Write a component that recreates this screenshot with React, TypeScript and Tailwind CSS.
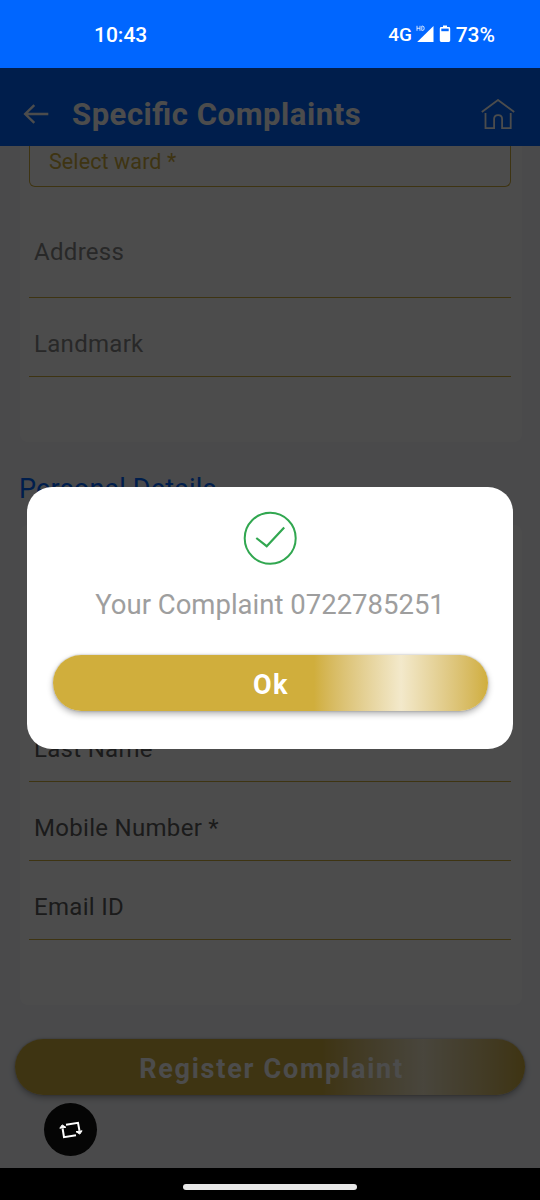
import type { ReactNode } from "react";

function StatusBar() {
  return (
    <div className="h-[68px] shrink-0 bg-[#0066ff] text-white flex items-center justify-between pt-0.5 pl-[94px] pr-[45px]">
      <span className="text-[21px] leading-6 font-medium">10:43</span>
      <div className="flex items-center">
        <span className="text-[19px] leading-6 font-medium tracking-[-0.2px]">4G</span>
        <svg className="ml-[4px] mb-0.5" width="18" height="18" viewBox="0 0 18 18">
          <path d="M17.500 1v16H1.200z" fill="#fff" />
          <path d="M1 .8v5M4 .8v5M1 3.300h3M5.800 1.100v4.400h.8q1.600 0 1.600-2.200t-1.600-2.200z" fill="none" stroke="#fff" strokeWidth=".8" />
        </svg>
        <svg className="ml-[5px] mb-0.5" width="12" height="18" viewBox="0 0 12 18">
          <path d="M4 .5h4v1.500h1.800q1.400 0 1.400 1.400v12.200q0 1.400-1.400 1.400H2.200q-1.400 0-1.400-1.400V3.400Q.8 2 2.200 2H4z" fill="#fff" />
          <path d="M2.300 3.600h7.400v2.600H2.300z" fill="#0066ff" />
        </svg>
        <span className="ml-[5px] text-[21px] leading-6 font-medium">73%</span>
      </div>
    </div>
  );
}

function Header() {
  return (
    <header className="h-[78px] shrink-0 bg-[#0066ff] text-white flex items-center pt-[14px] pl-[23px] pr-[25px]">
      <svg width="26" height="20" viewBox="0 0 26 20" fill="none" stroke="currentColor" strokeWidth="2.400">
        <path d="M25.300 10H2.500M11.300 1.200L2.200 10l9.100 8.800" />
      </svg>
      <h1 className="ml-[23px] mt-0.5 flex-1 text-[31px] leading-9 font-bold tracking-[0.55px] [font-feature-settings:'liga']">
        Specific Complaints
      </h1>
      <svg width="34" height="31" viewBox="0 0 34 31" fill="none" stroke="currentColor" strokeWidth="1.800">
        <path d="M.8 13L17 1l16.200 12" />
        <path d="M4.500 14v15.200h8.600V20q0-3.800 4-3.800t4 3.800v9.200h8.600V14" />
      </svg>
    </header>
  );
}

function Field({ label, className }: { label: string; className: string }) {
  return (
    <div className={`border-b border-[#d0ae3c] px-[5px] flex text-[24px] leading-7 tracking-[0.3px] ${className}`}>
      {label}
    </div>
  );
}

function GoldButton({ className, children }: { className: string; children: ReactNode }) {
  return (
    <button
      className={`block rounded-full bg-linear-to-r from-[#d0ae3c] from-60% via-[#f3e9cb] via-80% to-[#d0ae3c] text-white font-bold shadow-[0_3px_6px_rgba(0,0,0,0.3),0_0_2px_rgba(0,0,0,0.3)] ${className}`}
    >
      {children}
    </button>
  );
}

function ComplaintForm() {
  return (
    <div className="flex-1 overflow-hidden bg-[#f7f8fc]">
      <section className="ml-[20px] mr-[18px] h-[296px] rounded-b-lg bg-white pl-[9px] pr-[11px]">
        <div className="h-[41px] rounded-b-md border border-t-0 border-[#d0ae3c] pl-[19px] text-[21.5px] leading-8 tracking-[0.1px] text-[#d0ae3c]">
          Select ward *
        </div>
        <Field label="Address" className="h-[111px] items-end pb-[31px] text-[#888]" />
        <Field label="Landmark" className="h-[79px] items-end pb-[18px] text-[#888]" />
      </section>
      <h2 className="ml-[19px] mt-[29px] text-[27px] leading-9 tracking-[0.15px] text-[#0066ff]">Personal Details</h2>
      <section className="mt-[18px] ml-[20px] mr-[18px] h-[480px] rounded-lg bg-white pl-[9px] pr-[11px]">
        <Field label="First Name" className="h-[178px] items-end pb-[18px] text-[#5c5c5c]" />
        <Field label="Last Name" className="h-[79px] items-end pb-[18px] text-[#5c5c5c]" />
        <Field label="Mobile Number *" className="h-[79px] items-end pb-[18px] text-[#5c5c5c]" />
        <Field label="Email ID" className="h-[79px] items-end pb-[18px] text-[#5c5c5c]" />
      </section>
      <GoldButton className="mx-[15px] mt-[34px] h-[56px] w-[510px] pt-1 pl-[3px] text-[27px] leading-9 tracking-[1.75px]">
        Register Complaint
      </GoldButton>
    </div>
  );
}

function SuccessDialog() {
  return (
    <div className="absolute inset-0 bg-black/70 flex items-center justify-center">
      <div role="dialog" className="w-[486px] h-[262px] rounded-[25px] bg-white flex flex-col items-center pt-[24px]">
        <svg width="54" height="54" viewBox="0 0 54 54" fill="none" stroke="#31a750" strokeWidth="2">
          <circle cx="27.200" cy="27.300" r="25.500" />
          <path d="M13.300 27l10.400 8.200L41.200 16.500" strokeWidth="2.200" />
        </svg>
        <p className="mt-[22px] text-[27.500px] leading-9 text-[#9e9e9e]">Your Complaint 0722785251</p>
        <GoldButton className="ml-px mt-[32px] h-[56px] w-[435px] pt-1 pl-px text-[27px] leading-9 tracking-[1.500px]">
          Ok
        </GoldButton>
      </div>
    </div>
  );
}

function RotateButton() {
  return (
    <button className="absolute left-[44px] bottom-[12px] size-[53px] rounded-full bg-[#050505] flex items-center justify-center">
      <svg width="24" height="18" viewBox="0 0 24 18" fill="none" stroke="#fff" strokeWidth="2">
        <path d="M7 3.700L19 1.800l1.500 8M17 14.300L5 16.200 3.600 7.500" />
        <path d="M.8 7.200L3.200 3.900l3.700 2.400zM17 10.700l3.800 2.400 2.300-3.300z" fill="#fff" strokeWidth="1" />
      </svg>
    </button>
  );
}

export default function App() {
  return (
    <div className="w-[540px] h-[1200px] overflow-hidden flex flex-col font-[Roboto,sans-serif]">
      <StatusBar />
      <main className="relative h-[1100px] shrink-0 flex flex-col">
        <Header />
        <ComplaintForm />
        <SuccessDialog />
        <RotateButton />
      </main>
      <nav className="flex-1 bg-black flex items-center justify-center pt-[5px]">
        <div className="h-[6px] w-[174px] rounded-full bg-[#e8e8e8]" />
      </nav>
    </div>
  );
}
